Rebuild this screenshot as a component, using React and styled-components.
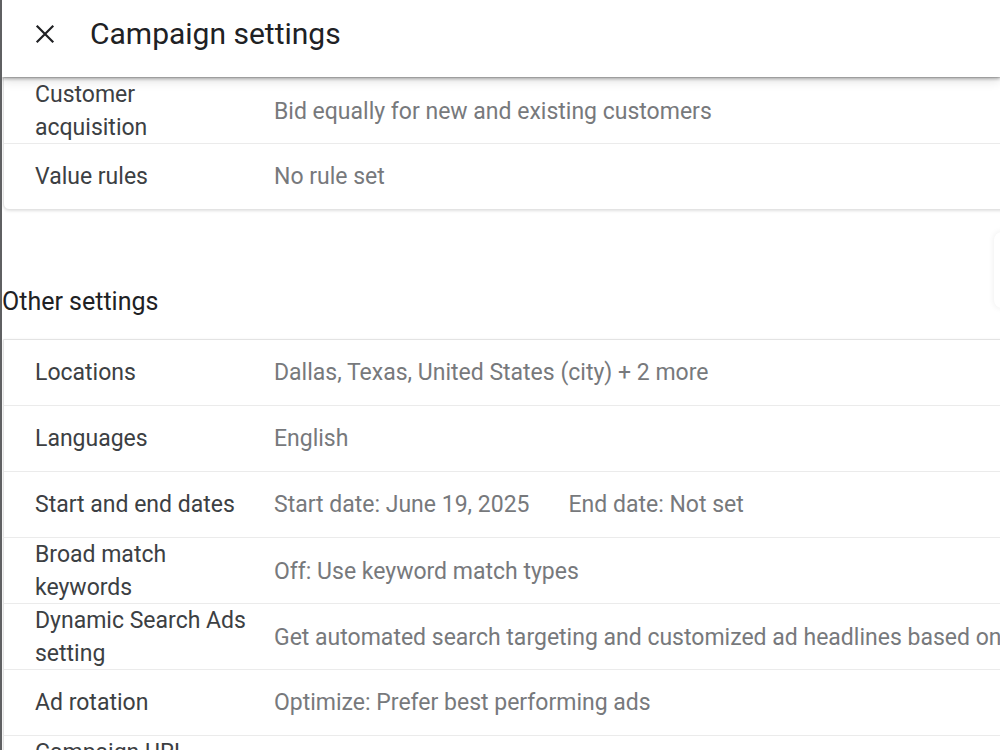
import React from 'react'
import styled, { createGlobalStyle } from 'styled-components'

const GlobalStyle = createGlobalStyle`
    html, body {
        margin: 0;
        padding: 0;
        background: #ffffff;
        overflow: hidden;
    }
    body {
        font-family: Roboto, "Open Sans", Arial, sans-serif;
        -webkit-font-smoothing: antialiased;
    }
`

// labels carry their own line breaks, the way the panel wraps them
const topRows = [
    { label: 'Customer\nacquisition', value: 'Bid equally for new and existing customers' },
    { label: 'Value rules', value: 'No rule set' },
]

const otherRows = [
    { label: 'Locations', value: 'Dallas, Texas, United States (city) + 2 more' },
    { label: 'Languages', value: 'English' },
    { label: 'Start and end dates', dates: ['Start date: June 19, 2025', 'End date: Not set'] },
    { label: 'Broad match\nkeywords', value: 'Off: Use keyword match types' },
    { label: 'Dynamic Search Ads\nsetting', value: 'Get automated search targeting and customized ad headlines based on your website' },
    { label: 'Ad rotation', value: 'Optimize: Prefer best performing ads' },
    { label: 'Campaign URL\noptions', value: 'No options set' },
]

function CloseIcon() {
    return (
        <svg width="20" height="20" viewBox="0 0 20 20">
            <path d="M2.5 2.5 L17.5 17.5 M17.5 2.5 L2.5 17.5" stroke="#202124" strokeWidth="2.2" strokeLinecap="square" />
        </svg>
    )
}

function SettingRow({ row }) {
    return (
        <Row>
            <Label>{row.label}</Label>
            {row.dates ? (
                <Value>
                    <span>{row.dates[0]}</span>
                    <span>{row.dates[1]}</span>
                </Value>
            ) : (
                <Value>{row.value}</Value>
            )}
        </Row>
    )
}

function App() {
    return (
        <>
            <GlobalStyle />
            <Frame>
                <Header>
                    <CloseButton aria-label="Close"><CloseIcon /></CloseButton>
                    <Title>Campaign settings</Title>
                </Header>
                <Scroller>
                    <Card>
                        {topRows.map(row => <SettingRow key={row.label} row={row} />)}
                    </Card>
                    <SectionTitle>Other settings</SectionTitle>
                    <Card>
                        {otherRows.map(row => <SettingRow key={row.label} row={row} />)}
                    </Card>
                </Scroller>
                <SidePeek />
            </Frame>
        </>
    )
}

const Frame = styled.div`
    position: relative;
    width: 1000px;
    height: 750px;
    overflow: hidden;
    box-sizing: border-box;
    border-left: 2px solid #5f6062;
    background: #ffffff;
`

const Header = styled.header`
    position: relative;
    z-index: 2;
    height: 77px;
    display: flex;
    align-items: center;
    gap: 33px;
    padding-left: 31px;
    background: #ffffff;
    box-shadow: 0 2px 3px rgba(0, 0, 0, 0.28), 0 4px 10px rgba(0, 0, 0, 0.12);
`

const CloseButton = styled.button`
    display: flex;
    align-items: center;
    justify-content: center;
    width: 24px;
    height: 24px;
    padding: 0;
    margin-top: -10px;
    border: none;
    background: transparent;
    cursor: pointer;
`

const Title = styled.h1`
    margin: 0 0 10px;
    font-size: 30px;
    font-weight: 400;
    color: #202124;
`

const Scroller = styled.div`
    display: flex;
    flex-direction: column;
    width: 1040px;
`

const Card = styled.div`
    margin-left: 1px;
    background: #ffffff;
    border: 1px solid #e3e3e3;
    border-radius: 0 0 6px 6px;
    box-shadow: 0 1px 3px rgba(0, 0, 0, 0.12);
`

const Row = styled.div`
    display: grid;
    grid-template-columns: 239px 1fr;
    align-items: center;
    height: 65px;
    padding-left: 31px;
    border-top: 1px solid #ebebeb;

    &:first-child {
        border-top: none;
    }
`

const Label = styled.div`
    font-size: 23px;
    line-height: 33px;
    color: #3c4043;
    white-space: pre-line;
`

const Value = styled.div`
    display: flex;
    gap: 39px;
    font-size: 23px;
    line-height: 33px;
    color: #77797c;
    white-space: nowrap;
    overflow: hidden;
`

const SectionTitle = styled.h2`
    margin: 76px 0 21px;
    font-size: 25px;
    font-weight: 400;
    line-height: 32px;
    color: #202124;
`

const SidePeek = styled.div`
    position: absolute;
    top: 232px;
    left: 992px;
    width: 40px;
    height: 76px;
    border-radius: 8px;
    background: #ffffff;
    box-shadow: 0 0 6px rgba(0, 0, 0, 0.08);
`

export default App
